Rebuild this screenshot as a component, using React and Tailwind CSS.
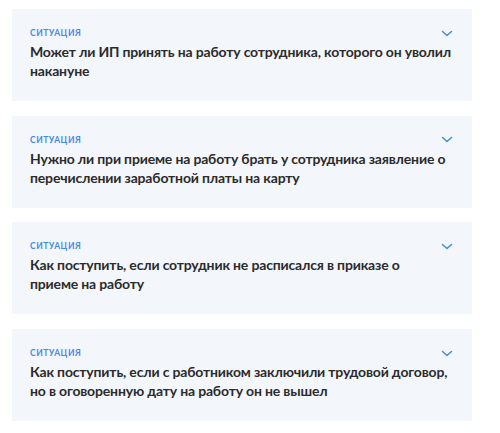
const ITEMS = [
  ['Может ли ИП принять на работу сотрудника, которого он уволил', 'накануне'],
  ['Нужно ли при приеме на работу брать у сотрудника заявление о', 'перечислении заработной платы на карту'],
  ['Как поступить, если сотрудник не расписался в приказе о', 'приеме на работу'],
  ['Как поступить, если с работником заключили трудовой договор,', 'но в оговоренную дату на работу он не вышел']
];

function Chevron() {
  return (
    <svg width="12" height="7" viewBox="0 0 12 7" fill="none" className="flex-shrink-0 mr-[1px]">
      <path d="M1.5 1.5l4.5 4 4.5-4" stroke="#3d8fd6" strokeWidth="1.5" strokeLinecap="round" strokeLinejoin="round" />
    </svg>
  );
}

function SituationCard({ lines }) {
  return (
    <div className="bg-[#f3f6fb] h-[92px] pl-[18px] pr-[18px] pt-[19px]">
      <div className="flex items-center justify-between">
        <span className="text-[8.5px] font-bold uppercase tracking-[0.06em] text-[#4688e8] leading-[10px]">
          ситуация
        </span>
        <Chevron />
      </div>
      <div className="mt-[4px] text-[14px] font-bold leading-[19px] tracking-[-0.012em] text-[#2b2b2b]">
        {lines.map((l, i) => (
          <div key={i} className="whitespace-nowrap">{l}</div>
        ))}
      </div>
    </div>
  );
}

export default function App() {
  return (
    <div className="w-[500px] h-[433px] bg-white pt-[9px] pl-[12px] pr-[28px]" style={{ fontFamily: 'Lato, "Liberation Sans", sans-serif' }}>
      <div className="flex flex-col gap-[14.7px]">
        {ITEMS.map((l, i) => <SituationCard key={i} lines={l} />)}
      </div>
    </div>
  );
}
